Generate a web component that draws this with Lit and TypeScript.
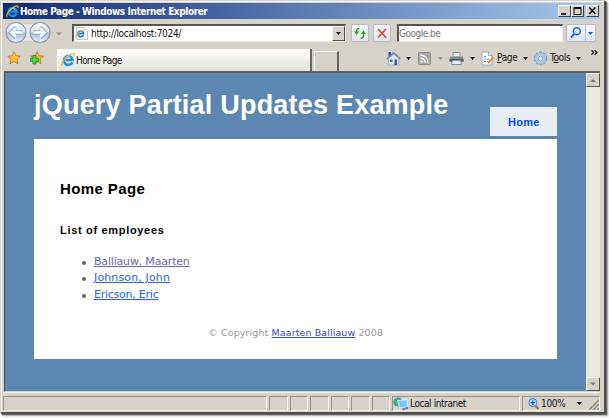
import { LitElement, html, css, svg } from "lit";
import { customElement } from "lit/decorators.js";

const ieLogo = (cls: string) => html`<svg class=${cls} viewBox="0 0 14 14">
  <path d="M11.3 9.2A4.4 4.4 0 1 1 11.6 7.1H4.6" fill="none" stroke="#1e90e6" stroke-width="2.5"/>
  <path d="M4 5.5Q7 2 10 5.4" fill="none" stroke="#8ad4fc" stroke-width="1"/>
  <path d="M1.2 12.9C-.4 10.5 4 4.5 9 1.8C12 .2 13.8.6 12.7 3.2" fill="none" stroke="#f0b429" stroke-width="1.3"/>
</svg>`;

const STAR = "M7 .7 8.9 4.8 13.3 5.2 10 8.2 11 12.8 7 10.4 3 12.8 4 8.2 .7 5.2 5.1 4.8Z";

const caret = (cls = "") => html`<svg class="caret ${cls}" viewBox="0 0 5 3"><path d="M0 0H5L2.5 3Z" fill="currentColor"/></svg>`;

@customElement("browser-toolbar")
class BrowserToolbar extends LitElement {
  static styles = css`
    :host { display: block; height: 52px; font: 10px/14px "DejaVu Sans Condensed", "DejaVu Sans", sans-serif; color: #111; }
    svg { display: block; flex: none; }
    .nav { display: flex; height: 27px; padding: 5px 0 0 2px; box-sizing: border-box; }
    .travel { width: 48px; height: 23px; margin: -3px 0 0 -1px; }
    .caret { width: 5px; height: 3px; }
    .caret.dim { color: #999; }
    .nav .recent { margin: 8px 10px 0 4px; width: 6px; height: 4px; }
    .field { box-sizing: border-box; flex: none; height: 18px; background: #fff; border: 1px solid #777; border-top: 2px solid #555; border-left: 2px solid #555; border-bottom-color: #eeece6; border-right-color: #eeece6; display: flex; align-items: center; }
    .address { width: 274px; }
    .doc { width: 13px; height: 13px; margin-left: 1px; }
    .url { flex: 1; margin-left: 3px; letter-spacing: -.31px; }
    .drop { width: 13px; height: 15px; box-sizing: border-box; background: #d6d2c9; border: 1px solid #f5f3ee; border-right-color: #555; border-bottom-color: #555; display: flex; align-items: center; justify-content: center; }
    .btn { width: 18px; height: 18px; box-sizing: border-box; border: 1px solid #b3bccb; border-radius: 2px; background: linear-gradient(#f7f8fb, #e2e5ec); margin-left: 5px; }
    .btn + .btn { margin-left: 4px; }
    .search { width: 166px; margin-left: 6px; color: #777; letter-spacing: -.5px; }
    .go { display: flex; flex: none; width: 30px; height: 18px; box-sizing: border-box; border: 1px solid #b3bccb; border-radius: 2px; background: linear-gradient(#f7f9fd, #dfe6f2); margin-left: 3px; color: #175de0; align-items: center; }
    .glass { width: 18px; height: 16px; border-right: 1px solid #b3bccb; }
    .go .caret { margin-left: 2px; }
    .tabs { display: flex; height: 25px; padding-left: 4px; }
    .fav { width: 14px; height: 14px; margin: 5px 9px 0 0; flex: none; }
    .tab { flex: none; width: 255px; height: 22px; margin: 3px 0 0 4px; box-sizing: border-box; background: linear-gradient(#fdfdfc, #e4e1da); border-left: 1px solid #fff; border-right: 2px solid #666; display: flex; align-items: center; padding-left: 3px; }
    .logo { width: 14px; height: 14px; }
    .tab span { letter-spacing: -.6px; margin: 1px 0 0 1px; }
    .newtab { flex: none; width: 25px; height: 20px; margin: 5px 0 0 2px; box-sizing: border-box; border: 1px solid #f7f5f0; border-bottom: 0; border-right: 2px solid #666; }
    .cmds { flex: none; display: flex; align-items: center; height: 18px; margin: 3px 0 0 47px; }
    .cmds .caret { margin: 0 7px 0 5px; }
    .ic { width: 15px; height: 15px; }
    .feed { width: 13px; }
    .cmds .c2 { margin-left: 7px; margin-right: 6px; }
    .cmds .c4 { margin-left: 6px; margin-right: 5px; }
    .word { margin-left: 2px; width: 22px; white-space: nowrap; letter-spacing: -.35px; }
    .cmds .c3 { margin-left: 4px; margin-right: 5px; }
    .more { width: 7px; height: 5px; margin: -11px 0 0 5px; }
  `;
  render() {
    return html`
      <div class="nav">
        <svg class="travel" viewBox="0 0 48 23">
          <defs><linearGradient id="b" x2="0" y2="1"><stop stop-color="#fafcff"/><stop offset=".45" stop-color="#dce6f3"/><stop offset=".55" stop-color="#a9bdd8"/><stop offset="1" stop-color="#edf5fd"/></linearGradient></defs>
          <path d="M12 1.5Q24 4.500 36 1.500A10 10 0 0 1 36 21.500Q24 18.500 12 21.500Z" fill="#e7e7e7" stroke="#bcbcbc" stroke-width=".6"/>
          ${[12, 36].map((x) => svg`<circle cx=${x} cy="11.500" r="10" fill="url(#b)" stroke="#8796ae" stroke-width="1.100"/>`)}
          <path d="M19 11.500H7M12 6.500 7 11.500 12 16.500M29 11.500H41M36 6.500 41 11.500 36 16.500" fill="none" stroke="#8fa4c3" stroke-width="4"/>
          <path d="M18.500 11.500H7.500M12 7 7.500 11.500 12 16M29.500 11.500H40.500M36 7 40.500 11.500 36 16" fill="none" stroke="#fff" stroke-width="2.600"/>
        </svg>
        ${caret("dim recent")}
        <div class="field address">
          <svg class="doc" viewBox="0 0 13 13"><path d="M1.500.5H9L12.500 4V12.500H1.500Z" fill="#f8f8f6" stroke="#c2c2bc"/><path d="M8.300 8.200A2.900 2.900 0 1 1 8.600 6.700H3.500" fill="none" stroke="#1684dc" stroke-width="1.700"/><path d="M1.200 11C.5 9 5 3.500 9.500 3" fill="none" stroke="#eeb02a" stroke-width="1.100"/></svg>
          <span class="url">http://localhost:7024/</span>
          <div class="drop">${caret()}</div>
        </div>
        <svg class="btn" viewBox="0 0 16 16"><path d="M7.500 3.500Q4.300 3 4.600 7M8.500 13Q12 13.500 11.500 9" fill="none" stroke="#32a22a" stroke-width="1.500"/><path d="M2 6.500H7.200L4.600 10ZM8.800 9H14L11.400 5.500Z" fill="#32a22a"/></svg>
        <svg class="btn" viewBox="0 0 16 16"><path d="M4 4 12 12.500M12 4 4 12.500" stroke="#dc4a43" stroke-width="1.800"/></svg>
        <div class="field search">Google.be</div>
        <div class="go"><svg class="glass" viewBox="0 0 18 16"><circle cx="9.800" cy="6.300" r="3.500" fill="#e9f4ff" stroke="#2769e5" stroke-width="1.500"/><path d="M7.200 9 4 12.500" stroke="#2769e5" stroke-width="2.200"/></svg>${caret()}</div>
      </div>
      <div class="tabs">
        <svg class="fav" viewBox="0 0 14 14"><path d=${STAR} fill="#fcbd35" stroke="#c47e1a" stroke-width=".9"/><path d="M7 2.800 8 6 11 6.300" fill="none" stroke="#ffe48b"/></svg>
        <svg class="fav" viewBox="0 0 14 14"><path d=${STAR} fill="#fcbd35" stroke="#c47e1a" stroke-width=".9"/><path d="M3 4.500H6V7.300H8.700V10.300H6V13H3V10.300H.4V7.300H3Z" fill="#52d33d" stroke="#198a18" stroke-width=".8"/></svg>
        <div class="tab">${ieLogo("logo")}<span>Home Page</span></div>
        <div class="newtab"></div>
        <div class="cmds">
          <svg class="ic" viewBox="0 0 15 15"><path d="M2.500 1H5V6H2.500Z" fill="#2849c9"/><path d="M2.500 7.500V14H12.800V7.500L7.700 3Z" fill="#dfe7f4" stroke="#8c9bb3" stroke-width=".7"/><path d="M.8 8 7.700 1.800 14.400 8" fill="none" stroke="#7183a5" stroke-width="1.500"/><path d="M4 8.500H6.500V11H4Z" fill="#44659a"/><path d="M8.500 8.500H11V14H8.500Z" fill="#2c5896"/></svg>
          ${caret()}
          <svg class="ic feed" viewBox="0 0 13 15"><rect x=".5" y="1.500" width="12" height="12" rx="1" fill="#aaa" stroke="#8b8b8b"/><circle cx="3.600" cy="10.600" r="1.200" fill="#fff"/><path d="M2.500 7A4.500 4.500 0 0 1 7 11.800M2.500 4A7.500 7.500 0 0 1 10 11.800" fill="none" stroke="#fff" stroke-width="1.300"/></svg>
          ${caret("dim c2")}
          <svg class="ic" viewBox="0 0 15 15"><path d="M4 5V1.500H11V5" fill="#f7f9fb" stroke="#8a9098"/><path d="M1 5.500H14L14.500 10.500H.5Z" fill="#83888f"/><path d="M.5 8H14.500V10.500H.5Z" fill="#555b62"/><path d="M3.500 9.500H11.500L12.500 13.500H2.500Z" fill="#e3efff" stroke="#8490a2"/></svg>
          ${caret("c4")}
          <svg class="ic" viewBox="0 0 15 15"><path d="M2 1H8.500L12 4.500V14H2Z" fill="#fbfcfe" stroke="#a3aab7"/><path d="M8.500 1V4.500H12" fill="none" stroke="#a3aab7"/><path d="M4 5.500H6M4 8H6M4 10.500H6M7 8H9M7 10.500H8" stroke="#668bce"/><path d="M8 12 13.500 6" stroke="#d89631" stroke-width="2"/></svg>
          <span class="word"><u>P</u>age</span>${caret("c3")}
          <svg class="ic" viewBox="0 0 15 15"><circle cx="7.500" cy="7.500" r="6.100" fill="none" stroke="#809cbe" stroke-width="1.500" stroke-dasharray="2.800 1"/><circle cx="7.500" cy="7.500" r="4.300" fill="#e9f4fc" stroke="#a2c5e6" stroke-width="2.800"/><circle cx="7.500" cy="7.500" r="2.300" fill="#e4e8e8" stroke="#7894b7" stroke-width=".8"/></svg>
          <span class="word">T<u>o</u>ols</span>${caret("c3")}
          <svg class="more" viewBox="0 0 7 5"><path d="M.5.3 2.800 2.500.5 4.700M3.700.3 6 2.500 3.700 4.700" fill="none" stroke="#111" stroke-width="1.200"/></svg>
        </div>
      </div>`;
  }
}

@customElement("employee-page")
class EmployeePage extends LitElement {
  static styles = css`
    :host { display: block; flex: 1; background: #5c87b2; padding: 0 28.600px 0 29px; font-family: "DejaVu Sans", sans-serif; }
    .head { display: flex; justify-content: space-between; height: 65.500px; }
    h1 { margin: 14px 0 0; font: bold 27px/36px "Liberation Sans", sans-serif; color: #fff; white-space: nowrap; letter-spacing: .21px; }
    .menu { width: 67px; height: 29px; margin-top: 33.500px; flex: none; background: #e8eef4; color: #034af3; font: bold 11px/30px "Liberation Sans", sans-serif; text-align: center; letter-spacing: .3px; }
    .main { height: 220.500px; background: #fff; padding: 1px 26px 0; box-sizing: border-box; }
    h2 { margin: 39px 0 0; font: bold 15px/20px "Liberation Sans", sans-serif; color: #000; letter-spacing: .4px; }
    h3 { margin: 23px 0 0; font: bold 11px/16px "Liberation Sans", sans-serif; color: #000; letter-spacing: .68px; }
    ul { list-style: none; margin: 16.500px 0 0; padding: 0 0 0 22px; font-size: 11px; line-height: 16.400px; color: #666; }
    li { display: flex; align-items: center; }
    li::before { content: ""; width: 4px; height: 4px; border-radius: 50%; background: #666; margin: 1px 8px 0 0; }
    li { margin-left: 0; }
    a { color: #2563ee; text-decoration: underline; }
    li:nth-child(1) { letter-spacing: -.18px; }
    li:nth-child(2) { letter-spacing: .14px; }
    li:nth-child(3) { letter-spacing: -.24px; }
    .seen { color: #6868bd; }
    .foot { margin-top: 22.500px; text-align: center; font-size: 9.500px; line-height: 14px; color: #999; letter-spacing: .1px; }
    .foot a { color: #4048b8; }
  `;
  render() {
    return html`
      <div class="head"><h1>jQuery Partial Updates Example</h1><div class="menu">Home</div></div>
      <div class="main">
        <h2>Home Page</h2>
        <h3>List of employees</h3>
        <ul>
          <li><a class="seen">Balliauw, Maarten</a></li>
          <li><a>Johnson, John</a></li>
          <li><a>Ericson, Eric</a></li>
        </ul>
        <div class="foot">© Copyright <a>Maarten Balliauw</a> 2008</div>
      </div>`;
  }
}

@customElement("app-root")
class AppRoot extends LitElement {
  static styles = css`
    :host { display: block; width: 609px; height: 418px; overflow: hidden; background: #fff; }
    svg { display: block; flex: none; }
    .window { width: 605px; height: 413px; box-sizing: border-box; background: #d6d2ca; border: 1px solid #d6d2ca; border-right: 1px solid #555; border-bottom: 1px solid #555; box-shadow: inset 1px 1px #fafaf7, 1px 1px 0 #484848, 2px 2px 1px #686868, 3px 3px 2px #aaa; padding: 2px 4px 0 2px; }
    .title { height: 16px; display: flex; align-items: center; background: linear-gradient(90deg, #0f2b72, #a6caf0); color: #fff; font: bold 10px/16px "DejaVu Sans Condensed", "DejaVu Sans", sans-serif; padding: 0 1px 0 3px; }
    .logo { width: 13px; height: 13px; margin-right: 1px; }
    .title span { flex: 1; letter-spacing: -.43px; padding-top: 1px; }
    .wb { width: 13px; height: 12px; box-sizing: border-box; background: #d6d2c9; border: 1px solid #fff; border-right-color: #444; border-bottom-color: #444; }
    .wb:last-child { margin-left: 2px; }
    .view { display: flex; height: 321px; margin-left: 1px; box-sizing: border-box; border-top: 2px solid #5e625f; border-left: 1px solid #45535c; border-bottom: 1px solid #d6d2ca; }
    .scroll { width: 14px; display: flex; flex-direction: column; justify-content: space-between; background: #eae8e3; flex: none; }
    .sb { width: 14px; height: 14px; box-sizing: border-box; background: #d6d2c9; border: 1px solid #fff; border-right-color: #555; border-bottom-color: #555; }
    .status { display: grid; grid-template-columns: 264px repeat(6, 18.500px) 128px 1fr; gap: 2px; height: 19px; padding-top: 3px; box-sizing: border-box; border-top: 1px solid #f4f2ed; font: 10px/15px "DejaVu Sans Condensed", "DejaVu Sans", sans-serif; color: #111; }
    .pane { height: 15px; box-sizing: border-box; border: 1px solid #96938d; border-right-color: #f8f6f2; border-bottom-color: #f8f6f2; display: flex; align-items: center; white-space: nowrap; }
    .globe { width: 16px; height: 14px; margin: 0 1px 0 0; }
    .zone { letter-spacing: -.42px; }
    .mag { width: 11px; height: 12px; margin: 0 2px 0 5px; }
    .pct { letter-spacing: -.3px; flex: 1; }
    .caret { width: 5px; height: 3px; margin-right: 6px; }
    .grip { width: 11px; height: 12px; }
  `;
  render() {
    return html`
      <div class="window">
        <div class="title">
          ${ieLogo("logo")}<span>Home Page - Windows Internet Explorer</span>
          <svg class="wb" viewBox="0 0 11 10"><path d="M2 8H7" stroke="#000" stroke-width="1.600"/></svg>
          <svg class="wb" viewBox="0 0 11 10"><path d="M2 1.500H9V8.500H2ZM2 2.500H9" fill="none" stroke="#111"/></svg>
          <svg class="wb" viewBox="0 0 11 10"><path d="M2.300 1.500 8.300 8M8.300 1.500 2.300 8" stroke="#111" stroke-width="1.500"/></svg>
        </div>
        <browser-toolbar></browser-toolbar>
        <div class="view">
          <employee-page></employee-page>
          <div class="scroll">
            <svg class="sb" viewBox="0 0 12 12"><path d="M3 8H9L6 5Z" fill="#777"/></svg>
            <svg class="sb" viewBox="0 0 12 12"><path d="M3 4.500H9L6 7.500Z" fill="#777"/></svg>
          </div>
        </div>
        <div class="status">
          ${Array.from({ length: 7 }, () => html`<div class="pane"></div>`)}
          <div class="pane">
            <svg class="globe" viewBox="0 0 16 14"><circle cx="5" cy="5" r="4.600" fill="#248de0"/><path d="M1 4Q4-.5 6 2L4 5 5 8 3 9Z" fill="#4cba48"/><path d="M4.500 3.500 14 2.500 14.500 10 6.500 11Z" fill="#71c8fb" stroke="#e4edf8"/><path d="M9 11.500 15 9.500V12L10 13.500Z" fill="#6d7db8"/></svg>
            <span class="zone">Local intranet</span>
          </div>
          <div class="pane">
            <svg class="mag" viewBox="0 0 11 12"><path d="M6.500 7 10.500 11" stroke="#a86b3a" stroke-width="2"/><circle cx="4.800" cy="4.600" r="4" fill="#b8e0ff" stroke="#2e7fd8"/><path d="M2.500 4.600H7M4.800 2.400V6.900" stroke="#1558c4" stroke-width="1.400"/></svg>
            <span class="pct">100%</span>
            <svg class="caret" viewBox="0 0 5 3"><path d="M0 0H5L2.500 3Z"/></svg>
            <svg class="grip" viewBox="0 0 11 12"><path d="M1 12 11 2M5 12 11 6M9 12 11 10" stroke="#8b8882" stroke-width="1.500"/></svg>
          </div>
        </div>
      </div>`;
  }
}
